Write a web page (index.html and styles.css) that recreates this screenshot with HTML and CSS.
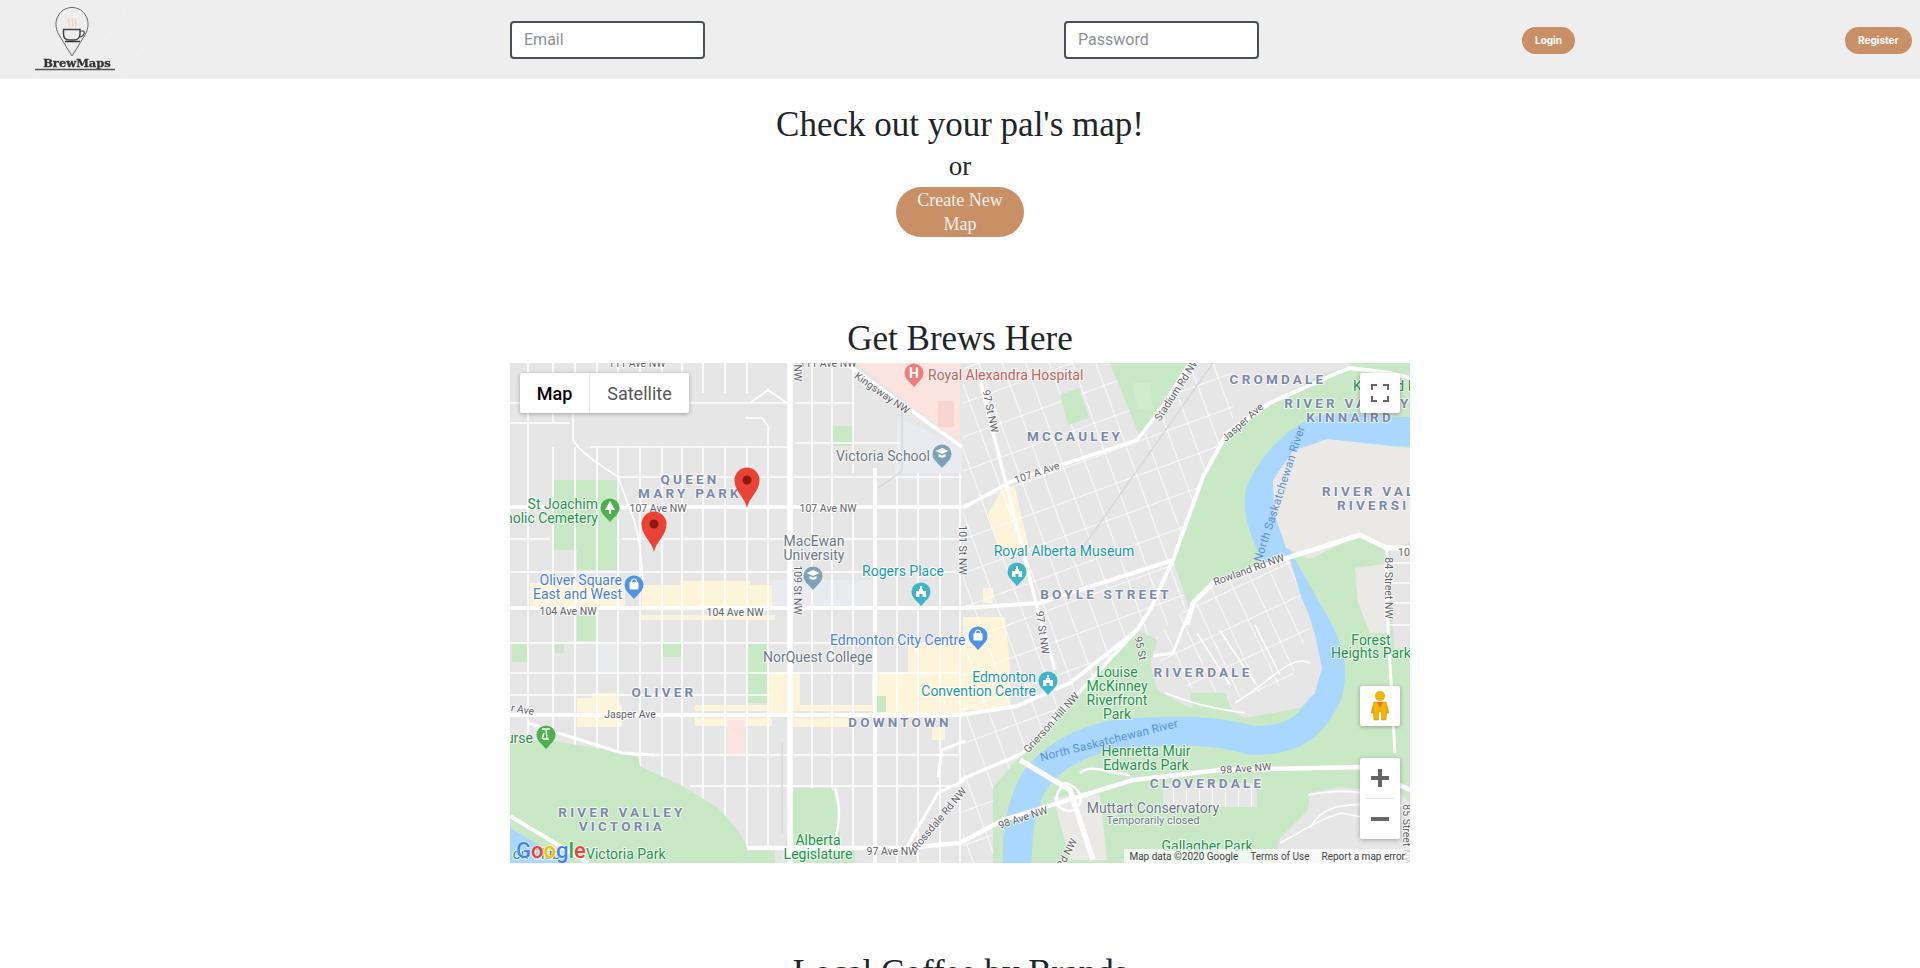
FILE: index.html
```html
<!DOCTYPE html>
<html lang="en">
<head>
    <meta charset="UTF-8">
    <meta name="viewport" content="width=device-width, initial-scale=1.0">
    <title>BrewMaps</title>
    <link rel="stylesheet" href="styles.css">
</head>
<body>
    <nav class="navbar">
        <a class="logo" href="#">
            <svg width="145" height="79" viewBox="0 0 145 79">
                <defs>
                    <pattern id="logo-stripes" width="36" height="36" patternUnits="userSpaceOnUse" patternTransform="rotate(35)">
                        <path d="M0 0V36" stroke="#fff" stroke-width="1" stroke-opacity=".5" stroke-dasharray="14 10"/>
                    </pattern>
                </defs>
                <rect width="145" height="79" fill="url(#logo-stripes)"/>
                <path d="M72 56 L59 35 C51 21 60 7.500 72 7.500 C84 7.500 93 21 85 35 Z" fill="none" stroke="#666" stroke-width="1"/>
                <path d="M63.500 29.500H80V34C80 38 77 40 74 40H69.500C66 40 63.500 38 63.500 34Z" fill="none" stroke="#444" stroke-width="1.500"/>
                <path d="M80 31H83C85 31 85 36 80 37" fill="none" stroke="#444" stroke-width="1.200"/>
                <path d="M65 41.500H80" stroke="#333" stroke-width="1.500"/>
                <path d="M69 18.500c-1.500 3 1.500 4 0 8M72.500 18.500c-1.500 3 1.500 4 0 8M75.500 18.500c-1.500 3 1.500 4 0 8" fill="none" stroke="#e8c9a4" stroke-width="1"/>
                <text class="logo-name" x="77" y="66.500" text-anchor="middle">BrewMaps</text>
                <path d="M35 69.500H115" stroke="#555" stroke-width="1.500"/>
            </svg>
        </a>
        <input class="nav-input" type="text" placeholder="Email">
        <input class="nav-input" type="password" placeholder="Password">
        <button class="nav-btn">Login</button>
        <button class="nav-btn">Register</button>
    </nav>

    <main class="content">
        <h2 class="title">Check out your pal's map!</h2>
        <h4 class="or">or</h4>
        <button class="create-btn">Create New Map</button>

        <h2 class="title map-title">Get Brews Here</h2>

        <div class="map">
            <svg class="map-canvas" width="900" height="500" viewBox="0 0 900 500">
                <defs>
                    <pattern id="grid-east" width="22" height="32" patternUnits="userSpaceOnUse" patternTransform="rotate(-20)">
                        <path d="M0 0H22M0 0V32" stroke="#fff" stroke-width="1.600" fill="none"/>
                    </pattern>
                    <pattern id="grid-river" width="20" height="34" patternUnits="userSpaceOnUse" patternTransform="rotate(-25)">
                        <path d="M0 0H20M0 0V34" stroke="#fff" stroke-width="1.500" fill="none"/>
                    </pattern>
                    <pattern id="grid-small" width="13" height="60" patternUnits="userSpaceOnUse">
                        <path d="M0 0V60" stroke="#fff" stroke-width="1.500" fill="none"/>
                    </pattern>
                    <path id="poi" d="M0 14L-7.200 6.200A9.500 9.500 0 1 1 7.200 6.200Z"/>
                    <path id="marker" d="M0 28C-1.500 18 -12.500 12 -12.500 0A12.500 12.500 0 1 1 12.500 0C12.500 12 1.500 18 0 28Z"/>
                    <g id="icon-bag"><rect x="-4.500" y="-3" width="9" height="7.500" rx="1" fill="#fff"/><path d="M-2.500 -3C-2.500 -7 2.500 -7 2.500 -3" fill="none" stroke="#fff" stroke-width="1.200"/></g>
                    <g id="icon-cap"><path d="M-6.500 -2L0 -5L6.500 -2L0 1Z" fill="#fff"/><path d="M-3.500 1V3.500C-2 5 2 5 3.500 3.500V1L0 2.500Z" fill="#fff"/></g>
                    <g id="icon-civic"><path d="M-5 5V-1H-2V-3H-1V-6H1V-3H2V-1H5V5H1.500V2H-1.500V5Z" fill="#fff"/></g>
                </defs>

                <!-- west side blocks -->
                <rect x="20" y="220" width="95" height="25" class="yellow"/>
                <path class="yellow" d="M132 222H170V218H240V222H278V244H132Z"/>
                <rect x="130" y="252" width="135" height="5" class="yellow"/>
                <rect x="258" y="310" width="19" height="40" class="yellow"/>
                <rect x="283" y="310" width="7" height="38" class="yellow"/>
                <path class="yellow" d="M362 310H398V280H455V350H362Z"/>
                <path class="yellow" d="M67 335H82V330H105L112 345V364H67Z"/>
                <rect x="185" y="342" width="77" height="6" class="yellow"/>
                <rect x="185" y="355" width="77" height="8" class="yellow"/>
                <rect x="283" y="342" width="79" height="6" class="yellow"/>
                <rect x="283" y="355" width="55" height="9" class="yellow"/>
                <rect x="422" y="364" width="13" height="13" class="yellow"/>
                <path class="yellow" d="M453 254H495L500 300V347H453Z"/>
                <path class="yellow" d="M495 122L478 150L490 190H520L505 125Z"/>
                <rect x="473" y="225" width="10" height="15" class="yellow"/>
                <rect x="217" y="357" width="18" height="34" class="pink"/>
                <path class="pink" d="M345 0H450V80Z"/>
                <rect x="428" y="38" width="16" height="26" fill="#f9d5cf"/>
                <path class="campus" d="M388 55L452 84V110H385Z"/>
                <rect x="262" y="217" width="103" height="28" class="campus"/>
                <rect x="88" y="280" width="20" height="30" class="campus"/>
                <path class="park" d="M42 117H108V207H67V187H42Z"/>
                <rect x="323" y="63" width="20" height="20" class="park"/>
                <rect x="67" y="252" width="19" height="26" class="park"/>
                <rect x="2" y="281" width="15" height="18" class="park"/>
                <rect x="45" y="280" width="9" height="10" class="park"/>
                <rect x="152" y="280" width="20" height="14" class="park"/>
                <rect x="238" y="280" width="20" height="60" class="park"/>
                <rect x="367" y="333" width="9" height="16" class="park"/>

                <!-- west side grid -->
                <path class="street" d="M18 0V500M43 0V60M65 84V500M87 84V500M108 84V500M130 84V500M152 84V500M172 84V500M193 84V500M215 84V500M237 84V500M258 84V500M65 0V40M87 0V40M108 0V40M130 0V40M152 0V40M172 0V30M193 0V30M215 0V30M237 0V30M43 84V500M302 0V500M322 0V500M343 0V110M343 145V500M387 110V500M408 110V500M430 110V500M450 110V500"/>
                <path class="street" d="M0 40H280M80 84H280M108 114H452M112 176H280M0 209H450M0 280H450M0 310H450M0 332H260M115 392H450M180 423H450M0 60H60M0 176H40M285 40H345M285 80H390M285 176H450"/>
                <path class="street" d="M63 30V77C70 90 95 105 108 114L125 160C130 180 132 200 133 220M240 40L258 27L277 40M235 55H252L258 63V84"/>

                <!-- east side grid -->
                <rect x="453" width="270" height="500" fill="url(#grid-east)"/>

                <!-- river valley -->
                <path class="park" d="M600 0H682L630 74Z"/>
                <path fill="#d0eccb" d="M622 20H640L643 45L628 47Z"/>
                <path class="park" d="M550 32L569 25L579 55L558 62Z"/>
                <path class="park" d="M815 10L838 5L840 0H900V500H483V424L513 390L567 330L627 267L665 285L680 247L663 197L693 114L717 70L760 40Z"/>
                <path class="park" d="M0 378H45L112 390L128 394L130 403L172 423L195 437L208 445L228 467L237 485L265 487V500H0Z"/>
                <path class="park" d="M283 425H322L330 455V485H345V500H275V485Z"/>
                <path fill="#a9d7fd" d="M0 465L60 500H0Z"/>
                <path class="street-major" stroke-width="4" d="M0 453L78 500"/>
                <path fill="none" stroke="#a9d7fd" stroke-width="29" stroke-linejoin="round" stroke-linecap="butt" d="M905 68C870 72 845 62 817 66C790 72 762 100 750 130C744 165 775 205 797 247C815 275 826 300 818 330C805 360 785 380 740 377C700 365 660 368 617 370C580 374 545 390 525 417C512 440 507 465 507 505"/>

                <!-- grey ground inside the river bends -->
                <path class="ground" d="M900 85L817 76L783 88L763 117L764 150L776 185L800 196L850 172L877 185L900 180Z"/>
                <path class="ground" d="M845 205L880 200V270H860L848 240Z"/>
                <path class="block" d="M650 270L683 240L705 222L780 196L790 230L800 255L806 275L812 305L805 330L790 345L735 355L720 348L680 345L647 327L640 300Z"/>
                <path fill="url(#grid-river)" d="M650 270L683 240L705 222L780 196L790 230L800 262L790 290L780 320L735 335L680 325L650 310Z"/>
                <path class="park" d="M680 330L715 330L722 348L683 345Z"/>
                <path class="block" d="M880 185H900V285H884Z"/>
                <path class="street" d="M880 200H900M880 220H900M880 240H900M880 262H900"/>
                <path class="block" d="M653 420H747V444H653Z"/>
                <rect x="653" y="420" width="94" height="24" fill="url(#grid-small)"/>
                <path class="ground" d="M543 434L590 432L597 497H560Z"/>
                <path class="block" d="M763 500L770 475L798 447L800 430L830 424L890 430L900 440V500Z"/>
                <path class="street" d="M770 480C790 470 810 455 832 450L870 458M800 465C810 445 830 440 860 442M798 432C830 425 875 428 895 445"/>
                <path class="street" d="M800 300C780 290 760 320 725 340M687 270L720 322M710 268L745 320M745 262L770 312M655 330C680 340 700 345 735 350"/>

                <!-- main roads -->
                <path class="street-major" stroke-width="5.500" d="M280 0V500"/>
                <path class="street-major" stroke-width="4" d="M365 105V500"/>
                <path class="street-major" stroke-width="3.500" d="M0 144H452M500 119L627 77L650 47L680 0M453 145L500 119"/>
                <path class="street-major" stroke-width="4" d="M0 245H453L530 240L663 197"/>
                <path class="street-major" stroke-width="4" d="M338 2L452 84"/>
                <path class="street-major" stroke-width="3.500" d="M470 17L527 244L545 307"/>
                <path class="street-major" stroke-width="4" d="M0 352H450L507 343L560 320L627 267L640 247L663 197L693 114L717 70L760 40L827 10L840 5L880 10L900 15"/>
                <path class="street-major" stroke-width="5" d="M677 262L683 240L703 220L780 194L850 172L877 185H900"/>
                <path class="street-major" stroke-width="3" d="M680 247L663 290L643 293M877 185V247L885 390"/>
                <path class="street-major" stroke-width="3.500" d="M627 267L513 390L450 417"/>
                <path class="street-major" stroke-width="5.500" d="M510 397L560 427L583 497"/>
                <path class="street-major" stroke-width="4.500" d="M237 485H395L450 480L493 457L623 417L710 407L850 404L900 427"/>
                <path class="street-major" stroke-width="3" d="M395 487L428 430L455 417M428 414L432 387L455 378M18 360L48 370L112 390L145 392"/>
                <path class="street-major" stroke-width="2.500" d="M555 420C545 430 540 445 560 448C575 445 575 425 555 420ZM325 425C330 440 332 470 320 485M570 410C580 400 600 410 620 412"/>
                <path fill="none" stroke="#d6d8db" stroke-width="1.500" d="M392 45V108L368 125M703 0L573 184M272 380V470"/>

                <!-- pins -->
                <use href="#poi" x="404" y="10" fill="#f27c7c"/>
                <text class="poi-h" x="404" y="15" text-anchor="middle">H</text>
                <use href="#poi" x="432" y="91" fill="#7da1b5"/><use href="#icon-cap" x="432" y="90"/>
                <use href="#poi" x="303" y="213" fill="#7da1b5"/><use href="#icon-cap" x="303" y="212"/>
                <use href="#poi" x="100" y="145" fill="#4db04c"/>
                <path d="M100 138L105 147H101V151H99V147H95Z" fill="#fff"/>
                <use href="#poi" x="36" y="372" fill="#4db04c"/>
                <path d="M32 366H40M36 366L37 376M33 376H39M34 370L32 376" stroke="#fff" stroke-width="1.500" fill="none"/>
                <use href="#poi" x="124" y="222" fill="#4f92ea"/><use href="#icon-bag" x="124" y="222"/>
                <use href="#poi" x="468" y="273" fill="#4f92ea"/><use href="#icon-bag" x="468" y="273"/>
                <use href="#poi" x="411" y="229" fill="#3fb5c9"/><use href="#icon-civic" x="411" y="229"/>
                <use href="#poi" x="538" y="318" fill="#3fb5c9"/><use href="#icon-civic" x="538" y="318"/>
                <use href="#poi" x="507" y="209" fill="#3fb5c9"/><use href="#icon-civic" x="507" y="209"/>

                <!-- places -->
                <text class="lbl hood" text-anchor="middle" x="180" y="121">QUEEN</text>
                <text class="lbl hood" text-anchor="middle" x="180" y="135">MARY PARK</text>
                <text class="lbl hood" text-anchor="middle" x="565" y="78">MCCAULEY</text>
                <text class="lbl hood" text-anchor="middle" x="768" y="21">CROMDALE</text>
                <text class="lbl green-lbl" x="843" y="28">Kinnaird Park</text>
                <text class="lbl hood" text-anchor="middle" x="838" y="45">RIVER VALLEY</text>
                <text class="lbl hood" text-anchor="middle" x="840" y="59">KINNAIRD</text>
                <text class="lbl hood" x="812" y="133">RIVER VALLEY</text>
                <text class="lbl hood" x="827" y="147">RIVERSIDE</text>
                <text class="lbl hood" text-anchor="middle" x="596" y="236">BOYLE STREET</text>
                <text class="lbl hood" text-anchor="middle" x="154" y="334">OLIVER</text>
                <text class="lbl hood" text-anchor="middle" x="390" y="364">DOWNTOWN</text>
                <text class="lbl hood" text-anchor="middle" x="112" y="454">RIVER VALLEY</text>
                <text class="lbl hood" text-anchor="middle" x="112" y="468">VICTORIA</text>
                <text class="lbl hood" text-anchor="middle" x="693" y="314">RIVERDALE</text>
                <text class="lbl hood" text-anchor="middle" x="697" y="425">CLOVERDALE</text>

                <text class="lbl red-lbl" x="418" y="17">Royal Alexandra Hospital</text>
                <text class="lbl grey-lbl" text-anchor="end" x="420" y="98">Victoria School</text>
                <text class="lbl green-lbl" text-anchor="end" x="88" y="146">St Joachim</text>
                <text class="lbl green-lbl" text-anchor="end" x="88" y="160">Catholic Cemetery</text>
                <text class="lbl grey-lbl" text-anchor="middle" x="304" y="183">MacEwan</text>
                <text class="lbl grey-lbl" text-anchor="middle" x="304" y="197">University</text>
                <text class="lbl teal-lbl" text-anchor="middle" x="393" y="213">Rogers Place</text>
                <text class="lbl blue-lbl" text-anchor="end" x="112" y="222">Oliver Square</text>
                <text class="lbl blue-lbl" text-anchor="end" x="112" y="236">East and West</text>
                <text class="lbl blue-lbl" x="320" y="282">Edmonton City Centre</text>
                <text class="lbl grey-lbl" x="253" y="299">NorQuest College</text>
                <text class="lbl teal-lbl" text-anchor="middle" x="554" y="193">Royal Alberta Museum</text>
                <text class="lbl teal-lbl" text-anchor="end" x="526" y="319">Edmonton</text>
                <text class="lbl teal-lbl" text-anchor="end" x="526" y="333">Convention Centre</text>
                <text class="lbl green-lbl" text-anchor="middle" x="607" y="314">Louise</text>
                <text class="lbl green-lbl" text-anchor="middle" x="607" y="328">McKinney</text>
                <text class="lbl green-lbl" text-anchor="middle" x="607" y="342">Riverfront</text>
                <text class="lbl green-lbl" text-anchor="middle" x="607" y="356">Park</text>
                <text class="lbl green-lbl" text-anchor="middle" x="636" y="393">Henrietta Muir</text>
                <text class="lbl green-lbl" text-anchor="middle" x="636" y="407">Edwards Park</text>
                <text class="lbl grey-lbl" text-anchor="middle" x="643" y="450">Muttart Conservatory</text>
                <text class="lbl grey-lbl small-lbl" text-anchor="middle" x="643" y="461">Temporarily closed</text>
                <text class="lbl green-lbl" text-anchor="middle" x="697" y="488">Gallagher Park</text>
                <text class="lbl green-lbl" text-anchor="middle" x="861" y="282">Forest</text>
                <text class="lbl green-lbl" text-anchor="middle" x="861" y="295">Heights Park</text>
                <text class="lbl green-lbl" text-anchor="middle" x="308" y="482">Alberta</text>
                <text class="lbl green-lbl" text-anchor="middle" x="308" y="496">Legislature</text>
                <text class="lbl green-lbl" x="76" y="496">Victoria Park</text>
                <text class="lbl green-lbl" text-anchor="end" x="23" y="380">Course</text>
                <text class="lbl green-lbl" text-anchor="end" x="50" y="496">on Club</text>

                <!-- streets -->
                <text class="lbl road" text-anchor="middle" x="127" y="4">111 Ave NW</text>
                <text class="lbl road" text-anchor="middle" x="318" y="4">111 Ave NW</text>
                <text class="lbl road" text-anchor="middle" x="148" y="149">107 Ave NW</text>
                <text class="lbl road" text-anchor="middle" x="318" y="149">107 Ave NW</text>
                <text class="lbl road" text-anchor="middle" x="58" y="252">104 Ave NW</text>
                <text class="lbl road" text-anchor="middle" x="225" y="253">104 Ave NW</text>
                <text class="lbl road" text-anchor="middle" x="120" y="355">Jasper Ave</text>
                <text class="lbl road" text-anchor="middle" x="382" y="492">97 Ave NW</text>
                <text class="lbl road" text-anchor="middle" transform="translate(284 227) rotate(90)">109 St NW</text>
                <text class="lbl road" text-anchor="middle" transform="translate(284 10) rotate(90)">NW</text>
                <text class="lbl road" text-anchor="middle" transform="translate(449 187) rotate(90)">101 St NW</text>
                <text class="lbl road" text-anchor="middle" transform="translate(477 49) rotate(78)">97 St NW</text>
                <text class="lbl road" text-anchor="middle" transform="translate(529 270) rotate(82)">97 St NW</text>
                <text class="lbl road" text-anchor="middle" transform="translate(370 33) rotate(35)">Kingsway NW</text>
                <text class="lbl road" text-anchor="middle" transform="translate(670 28) rotate(-57)">Stadium Rd NW</text>
                <text class="lbl road" text-anchor="middle" transform="translate(735 62) rotate(-42)">Jasper Ave</text>
                <text class="lbl road" text-anchor="middle" transform="translate(528 113) rotate(-19)">107 A Ave</text>
                <text class="lbl road" text-anchor="middle" transform="translate(740 210) rotate(-20)">Rowland Rd NW</text>
                <text class="lbl road" text-anchor="middle" transform="translate(875 225) rotate(90)">84 Street NW</text>
                <text class="lbl road" x="888" y="193">10</text>
                <text class="lbl road" text-anchor="middle" transform="translate(627 286) rotate(78)">95 St</text>
                <text class="lbl road" text-anchor="middle" transform="translate(544 362) rotate(-48)">Grierson Hill NW</text>
                <text class="lbl road" text-anchor="middle" x="736" y="409" transform="rotate(-4 736 409)">98 Ave NW</text>
                <text class="lbl road" text-anchor="middle" transform="translate(514 458) rotate(-18)">98 Ave NW</text>
                <text class="lbl road" text-anchor="middle" transform="translate(432 458) rotate(-50)">Rossdale Rd NW</text>
                <text class="lbl road" text-anchor="middle" transform="translate(560 492) rotate(-62)">Rd NW</text>
                <text class="lbl road" text-anchor="middle" transform="translate(893 472) rotate(90)">85 Street NW</text>
                <text class="lbl road" text-anchor="middle" transform="translate(12 350) rotate(10)">r Ave</text>
                <text class="river-lbl" text-anchor="middle" transform="translate(773 132) rotate(-72)">North Saskatchewan River</text>
                <text class="river-lbl" text-anchor="middle" transform="translate(600 381) rotate(-14)">North Saskatchewan River</text>

                <!-- dropped pins -->
                <use href="#marker" x="237" y="117" fill="#ea4335"/>
                <circle cx="237" cy="117" r="4.500" fill="#8c1a12"/>
                <use href="#marker" x="144" y="161" fill="#ea4335"/>
                <circle cx="144" cy="161" r="4.500" fill="#8c1a12"/>

                <text class="google" x="6" y="495"><tspan fill="#4285f4">G</tspan><tspan fill="#ea4335">o</tspan><tspan fill="#fbbc05">o</tspan><tspan fill="#4285f4">g</tspan><tspan fill="#34a853">l</tspan><tspan fill="#ea4335">e</tspan></text>
            </svg>

            <div class="map-type">
                <span class="map-type-btn active">Map</span>
                <span class="map-type-btn">Satellite</span>
            </div>
            <div class="map-ctl fullscreen">
                <svg width="18" height="18" viewBox="0 0 18 18"><path d="M1 6V1H6M12 1H17V6M17 12V17H12M6 17H1V12" fill="none" stroke="#666" stroke-width="2"/></svg>
            </div>
            <div class="map-ctl pegman">
                <svg width="18" height="30" viewBox="0 0 18 30">
                    <circle cx="9" cy="5" r="5" fill="#f5b400"/>
                    <path d="M3 11H15L18 22H16V16L15 29H10.500V21H7.500V29H3L2 16V22H0Z" fill="#f5b400" stroke="#c98a00" stroke-width=".5"/>
                    <path d="M6 11H12L9 17Z" fill="#e2703a"/>
                </svg>
            </div>
            <div class="map-ctl zoom">
                <button class="zoom-btn"><svg width="18" height="18" viewBox="0 0 18 18"><path d="M7 0H11V7H18V11H11V18H7V11H0V7H7Z" fill="#666"/></svg></button>
                <span class="zoom-sep"></span>
                <button class="zoom-btn"><svg width="18" height="18" viewBox="0 0 18 18"><path d="M0 7H18V11H0Z" fill="#666"/></svg></button>
            </div>
            <div class="attribution">
                <span>Map data ©2020 Google</span>
                <span>Terms of Use</span>
                <span>Report a map error</span>
            </div>
        </div>

        <h2 class="title brands-title">Local Coffee by Brands</h2>
    </main>
</body>
</html>
```

FILE: styles.css
```css
* {
  box-sizing: border-box;
}

body {
  margin: 0;
  background-color: #fff;
  color: #212529;
  font-family: 'Liberation Serif', serif;
}

/* Top bar */
.navbar {
  display: grid;
  grid-template-columns: 510px 554px 458px 323px auto;
  align-items: center;
  height: 79px;
  padding-bottom: 1px;
  background-color: #eee;
}

.logo {
  display: block;
  align-self: start;
  height: 79px;
}

.logo svg {
  filter: blur(0.4px);
}

.logo-name {
  font-family: 'DejaVu Serif', serif;
  font-size: 11.5px;
  font-weight: 700;
  fill: #333;
  stroke: #333;
  stroke-width: 0.3px;
}

.nav-input {
  width: 195px;
  height: 38px;
  padding: 0 12px;
  border: 2px solid #495057;
  border-radius: 4px;
  background-color: #fff;
  font-family: Roboto, sans-serif;
  font-size: 16px;
  outline: none;
}

.nav-input::placeholder {
  color: #8b9196;
  opacity: 1;
}

.nav-btn {
  justify-self: start;
  height: 27px;
  margin-top: 1px;
  padding: 0 13px;
  border: none;
  border-radius: 13.5px;
  background-color: #c98f65;
  color: #fff;
  font-family: Inter, sans-serif;
  font-size: 10px;
  font-weight: 700;
  cursor: pointer;
}

/* Main column */
.content {
  display: flex;
  flex-direction: column;
  align-items: center;
}

.title {
  margin: 0;
  font-size: 35px;
  font-weight: 400;
  line-height: 40px;
  text-align: center;
}

.content > .title:first-child {
  margin-top: 26px;
}

.or {
  margin: 5px 0 0;
  font-size: 27px;
  font-weight: 400;
  line-height: 32px;
}

.create-btn {
  width: 128px;
  height: 50px;
  margin-top: 5px;
  padding: 0 20px;
  border: none;
  border-radius: 25px;
  background-color: #c98f65;
  color: #f6f1ec;
  font-family: 'Liberation Serif', serif;
  font-size: 18px;
  line-height: 24px;
  cursor: pointer;
}

.map-title {
  margin-top: 82px;
}

/* Map */
.map {
  position: relative;
  width: 900px;
  height: 500px;
  margin-top: 4px;
  overflow: hidden;
  background-color: #e6e6e6;
}

.map-canvas {
  display: block;
}

.brands-title {
  margin-top: 90px;
}

.yellow {
  fill: #fdf4d9;
}

.pink {
  fill: #fbe4e0;
}

.campus {
  fill: #e9ebf0;
}

.park {
  fill: #c9e8c6;
}

.ground {
  fill: #ebe9e6;
}

.block {
  fill: #e6e6e6;
}

.street {
  fill: none;
  stroke: #fff;
  stroke-width: 1.6;
}

.street-major {
  fill: none;
  stroke: #fff;
  stroke-linejoin: round;
}

.lbl {
  font-family: Roboto, sans-serif;
  font-size: 14px;
  paint-order: stroke;
  stroke: #fff;
  stroke-width: 2px;
  stroke-linejoin: round;
  stroke-opacity: 0.75;
}

.hood {
  font-size: 13.5px;
  font-weight: 700;
  letter-spacing: 3.2px;
  fill: #7b89a9;
}

.road {
  font-size: 10.5px;
  fill: #5f6368;
}

.red-lbl {
  fill: #c5605a;
}

.grey-lbl {
  fill: #6c7887;
}

.green-lbl {
  fill: #25934a;
}

.teal-lbl {
  fill: #1e9aa6;
}

.blue-lbl {
  fill: #4b82d4;
}

.small-lbl {
  font-size: 11px;
}

.river-lbl {
  font-family: Roboto, sans-serif;
  font-size: 11.5px;
  letter-spacing: 0.3px;
  fill: #5a8fd8;
}

.poi-h {
  font-family: Roboto, sans-serif;
  font-size: 14px;
  font-weight: 700;
  fill: #fff;
}

.google {
  font-family: Roboto, sans-serif;
  font-size: 22px;
  font-weight: 500;
  paint-order: stroke;
  stroke: #fff;
  stroke-width: 1.500px;
  stroke-opacity: 0.7;
}

/* Controls over the map */
.map-type {
  position: absolute;
  top: 10px;
  left: 10px;
  display: flex;
  height: 40px;
  background-color: #fff;
  border-radius: 2px;
  box-shadow: 0 1px 4px rgba(0, 0, 0, 0.3);
  font-family: Roboto, sans-serif;
  font-size: 18px;
}

.map-type-btn {
  display: flex;
  align-items: center;
  justify-content: center;
  width: 99px;
  color: #565656;
}

.map-type-btn.active {
  width: 70px;
  border-right: 1px solid #e6e6e6;
  color: #000;
  font-weight: 500;
}

.map-ctl {
  position: absolute;
  right: 10px;
  width: 40px;
  display: flex;
  align-items: center;
  justify-content: center;
  background-color: #fff;
  border-radius: 2px;
  box-shadow: 0 1px 4px rgba(0, 0, 0, 0.3);
}

.fullscreen {
  top: 10px;
  height: 40px;
}

.pegman {
  top: 323px;
  height: 40px;
}

.zoom {
  top: 395px;
  flex-direction: column;
  height: 81px;
}

.zoom-btn {
  display: flex;
  align-items: center;
  justify-content: center;
  width: 40px;
  height: 40px;
  padding: 0;
  border: none;
  background: none;
}

.zoom-sep {
  width: 30px;
  height: 1px;
  background-color: #e6e6e6;
}

.attribution {
  position: absolute;
  right: 0;
  bottom: 0;
  display: flex;
  height: 14px;
  align-items: center;
  gap: 12px;
  padding: 0 5px;
  background-color: rgba(255, 255, 255, 0.7);
  color: #444;
  font-family: Roboto, sans-serif;
  font-size: 10px;
}
```
